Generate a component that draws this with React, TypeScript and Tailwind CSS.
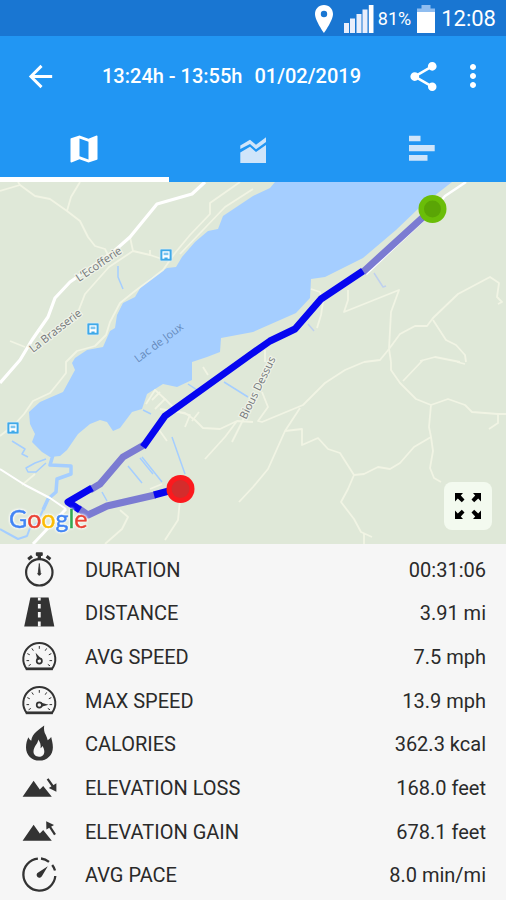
import type { ReactNode } from "react";
import { MdArrowBack, MdMap, MdMoreVert, MdShare } from "react-icons/md";

interface Stat {
  label: string;
  value: string;
  icon: ReactNode;
}

function StatIcon({ children }: { children: ReactNode }) {
  return (
    <svg viewBox="0 0 36 36" className="w-9 h-9 overflow-visible text-[#333333]" fill="currentColor" aria-hidden="true">
      {children}
    </svg>
  );
}

function StopwatchIcon() {
  return (
    <StatIcon>
      <circle cx="18.3" cy="20.3" r="13.2" fill="none" stroke="currentColor" strokeWidth="2.2" />
      <rect x="14.8" y="0.3" width="7" height="3.6" rx="0.8" />
      <rect x="16.6" y="3" width="3.4" height="4.2" />
      <path d="M7.2 7.2 11 4.2" stroke="currentColor" strokeWidth="3" />
      <path d="M29.4 7.2 25.6 4.2" stroke="currentColor" strokeWidth="3" />
      <path d="M18.3 11.5 19.3 20.5a1.5 1.5 0 1 1-2 0z" stroke="currentColor" strokeWidth="0.8" />
    </StatIcon>
  );
}

function RoadIcon() {
  return (
    <StatIcon>
      <path d="M9.4 2.4h18.2l5.7 29H3.2z" />
      <path
        d="M18.3 2.4v3.2M18.3 9v4.6M18.3 17v5.6M18.3 26.4v5"
        stroke="#f6f6f6"
        strokeWidth="2.8"
      />
    </StatIcon>
  );
}

function GaugeIcon({ needle }: { needle: string }) {
  return (
    <StatIcon>
      <path d="M5.6 29.8A16 16 0 1 1 31 29.8z" fill="none" stroke="currentColor" strokeWidth="2" strokeLinejoin="round" />
      <path d="M4.8 29.9h27" stroke="currentColor" strokeWidth="2.6" />
      <path
        d="M18.3 7v2.8M10.9 9.4l1.5 2.3M25.7 9.4l-1.5 2.3M6.3 14.6l2.5 1.2M30.3 14.6l-2.5 1.2M5.5 21.6h2.6M31.1 21.6h-2.6M7.6 26.8l2.2-1.4M29 26.8l-2.2-1.4"
        stroke="currentColor"
        strokeWidth="1"
      />
      <circle cx="18.3" cy="22" r="2.6" fill="none" stroke="currentColor" strokeWidth="1.7" />
      <path d={needle} />
    </StatIcon>
  );
}

function FlameIcon() {
  return (
    <StatIcon>
      <path
        fillRule="evenodd"
        d="M23.2-.6c-.6 4 .1 6.8 1.5 9.4.9 1.7 1.6 3.5 2 5.4 1.4-.8 2.6-1.9 3.5-3.2.4 2.3 1.7 6.2 1.7 10.2 0 7.8-5.8 13.4-13.5 13.4S5 29 5 21.4c0-4 1-7.6 2.4-10.2.6 1.5 1.5 2.7 2.8 3.5.4-4 2.6-6.7 5.6-9.4C18.3 3 20.7 1.2 23.2-.6zM17 13.5c.8 3.4-4.5 6.8-4.5 12 0 3.3 2.4 5.2 5.5 5.2s5.3-2 5.3-5c0-2.2-.9-4-1.8-5.6-.5 1-1 1.7-1.9 2.2.5-3.5-.6-6.8-2.6-8.8z"
      />
    </StatIcon>
  );
}

function MountainIcon({ direction }: { direction: "up" | "down" }) {
  return (
    <StatIcon>
      <path d="M1.6 26.8 12.6 10.8 18.8 19.6 22.2 16 30.8 26.8z" />
      {direction === "down" ? (
        <>
          <path d="M26.6 8.8 32 16.5" stroke="currentColor" strokeWidth="2.2" />
          <path d="M35.4 13.2 35.4 21.8 27.8 18z" />
        </>
      ) : (
        <>
          <path d="M34 20.6 28.8 12.6" stroke="currentColor" strokeWidth="2.2" />
          <path d="M25.4 15.6 25.2 7.2 33 11z" />
        </>
      )}
    </StatIcon>
  );
}

function PaceIcon() {
  return (
    <StatIcon>
      <path
        d="M16.9 1.6A16 16 0 1 0 34.3 19M34 13.5A16 16 0 0 0 31.2 8M28 4.8A16 16 0 0 0 20 1.5"
        fill="none"
        stroke="currentColor"
        strokeWidth="2.3"
      />
      <path d="M26.8 9.3 21 19a2.8 2.8 0 1 1-3.8-3.6z" />
    </StatIcon>
  );
}

const stats: Stat[] = [
  { label: "DURATION", value: "00:31:06", icon: <StopwatchIcon /> },
  { label: "DISTANCE", value: "3.91 mi", icon: <RoadIcon /> },
  { label: "AVG SPEED", value: "7.5 mph", icon: <GaugeIcon needle="M14.6 13.8 20 19.6 16.4 21.2z" /> },
  { label: "MAX SPEED", value: "13.9 mph", icon: <GaugeIcon needle="M27.6 21.8 20.4 19.8 20.4 23.8z" /> },
  { label: "CALORIES", value: "362.3 kcal", icon: <FlameIcon /> },
  { label: "ELEVATION LOSS", value: "168.0 feet", icon: <MountainIcon direction="down" /> },
  { label: "ELEVATION GAIN", value: "678.1 feet", icon: <MountainIcon direction="up" /> },
  { label: "AVG PACE", value: "8.0 min/mi", icon: <PaceIcon /> },
];

function StatusBar() {
  return (
    <div className="flex h-9 items-center justify-end gap-1 bg-[#1976d2] pt-0.5 pr-2.5 text-white">
      <svg viewBox="0 0 20 28" className="mr-1.5 h-7 w-5" fill="currentColor" aria-label="Location">
        <path
          fillRule="evenodd"
          d="M10 0C4.6 0 1 4 1 9c0 6.5 9 19 9 19s9-12.5 9-19c0-5-3.6-9-9-9zm0 5.8a3.2 3.2 0 1 1 0 6.4 3.2 3.2 0 0 1 0-6.4z"
        />
      </svg>
      <svg viewBox="0 0 30 28" className="h-7 w-[30px]" fill="#e9eefb" aria-label="Signal">
        <path d="M0 18h5v10H0zM6 13.5h5V28H6zM12.5 9h5v19h-5zM18.5 4.5h5V28h-5z" />
        <path d="M24.8 0h4.7v28h-4.7z" fill="#ffffff" />
      </svg>
      <span className="text-[18px] leading-6">81%</span>
      <svg viewBox="0 0 18 28" className="ml-0.5 h-7 w-[18px]" aria-label="Battery">
        <path d="M4.5 0h9v3.5H18V9H0V3.5h4.5z" fill="#8fbdf0" />
        <path d="M0 7h18v21H0z" fill="#ffffff" />
      </svg>
      <span className="ml-0.5 text-[22px] leading-7">12:08</span>
    </div>
  );
}

function AppBar() {
  return (
    <div className="flex h-20 items-center pl-5 pr-[13px]">
      <button type="button" aria-label="Back" className="flex size-10 items-center justify-center">
        <MdArrowBack size={35} />
      </button>
      <h1 className="ml-[42px] flex flex-1 gap-3 text-[20px] font-medium leading-6 whitespace-nowrap">
        <span>13:24h - 13:55h</span>
        <span>01/02/2019</span>
      </h1>
      <button type="button" aria-label="Share" className="flex size-10 items-center justify-center">
        <MdShare size={35} />
      </button>
      <button type="button" aria-label="More options" className="ml-2.5 flex size-10 items-center justify-center">
        <MdMoreVert size={36} />
      </button>
    </div>
  );
}

function Tabs() {
  return (
    <nav className="grid h-[66px] grid-cols-3">
      <button type="button" aria-label="Map" className="flex items-center justify-center border-b-[5px] border-white pt-1">
        <MdMap size={36} />
      </button>
      <button type="button" aria-label="Charts" className="flex items-center justify-center text-[#cfe5fa]">
        <svg viewBox="0 0 36 36" className="size-9" fill="currentColor">
          <path d="M5.3 14.6 15 8.8 21 13.8 31 6.3V11L21 18.3 15 13 5.3 18z" />
          <path d="M5.3 21.4 15 15.8 21 21 31 14V32H5.3z" />
        </svg>
      </button>
      <button type="button" aria-label="Laps" className="flex items-center justify-center text-[#cfe5fa]">
        <svg viewBox="0 0 36 36" className="size-9" fill="currentColor">
          <path d="M5 4.7h11.5v5.6H5zM5 14h25.7v6.2H5zM5 24h18.5v5.8H5z" />
        </svg>
      </button>
    </nav>
  );
}

function BusStop({ x, y }: { x: number; y: number }) {
  return (
    <g transform={`translate(${x} ${y})`}>
      <rect x="-6" y="-6" width="12" height="12" rx="1" fill="#3fa9e8" stroke="#d8ecf5" strokeWidth="0.8" />
      <path d="M-3.6-3.8h7.2v7.6h-2v-1.4h-3.2v1.4h-2z" fill="#ffffff" />
      <path d="M-2.4-2.4h4.8v2.6h-4.8z" fill="#7cc4ef" />
    </g>
  );
}

function RouteMap() {
  return (
    <section className="relative bg-[#dfe8d8]">
      <svg viewBox="0 0 506 362" className="block h-auto w-full" role="img" aria-label="Route map">
        <rect width="506" height="362" fill="#dfe8d8" />

        {/* lake and streams */}
        <path
          d="M275 0 270 6 253 14 223 34 218 47 208 49 195 60 182 75 176 85 167 86 152 95 142 103 135 115 123 121 117 133 115 146 110 149 103 165 87 168 75 176 72 181 75 188 63 210 40 220 29 230 30 242 35 252 32 260 42 270 50 275 60 274 67 268 78 252 90 242 100 238 107 240 113 249 120 246 132 230 142 227 147 212 163 202 177 205 192 198 192 180 207 175 220 170 221 156 253 150 296 131 310 116 311 97 325 95 363 76 396 48 420 25 452 0z"
          fill="#a5ceff"
        />
        <g fill="none" stroke="#a5ceff" strokeLinejoin="round">
          <path d="M53 273 50 283 71 284 71 292 57 297 56 310 48 317 43 328" strokeWidth="3.5" />
          <path d="M43 328 37 341 30 346 27 354 18 357 7 351 0 347" strokeWidth="2" />
          <path d="M12 259 25 267 22 272 28 275M46 277 35 281 26 286 28 290 36 290 46 281" strokeWidth="1.5" />
          <path d="M118 84 118 95 123 107M172 255 185 292M128 284 142 301M140 276 153 292M142 275 162 300M102 310 107 319M143 228 151 232M188 202 197 208M224 200 248 215" strokeWidth="1.5" />
          <path d="M374 91 383 105 386 104M308 142 314 149" strokeWidth="1.5" stroke="#bfd0ee" />
        </g>

        {/* minor roads */}
        <g fill="none" stroke="#f1f4e4" strokeWidth="1.8" strokeLinejoin="round">
          <path d="M0 9 20 3 35 14 50 17 67 29 80 39 88 55 95 64 105 67 108 73M67 29 71 15 80 0M20 3 18 0" />
          <path d="M130 55 133 69 109 85 85 112 78 130M133 69 150 73 162 77M150 73 150 68" />
          <path d="M240 0 210 21 210 32 190 53 175 71 163 88 135 109 120 121 110 140 106 153 95 164 77 169 66 180 66 191 59 200 50 211 33 219 24 232 14 243 0 254" />
          <path d="M253 7 225 25 180 72M10 159 25 165M38 147 45 153M22 303 35 292" />
          <path d="M311 107 320 110 323 120 321 133 317 146M348 108 348 118 344 130 399 108 391 130 389 167 400 152 415 144 427 144 433 136 458 112 490 95 499 101 497 115 502 120 498 122" />
          <path d="M433 138 446 158 456 163 465 173 466 180M389 167 380 178 364 180M420 179 435 175 460 180" />
          <path d="M364 180 345 188 325 201 308 218 303 223 262 240 258 239 268 225 262 210" />
          <path d="M391 180 391 188 400 201 416 217 431 223 448 217 465 223 472 230 498 232 506 232M498 232 498 241 489 247M431 223 429 245 431 255 433 269 430 286 434 296 441 300" />
          <path d="M431 255 414 265 400 281 390 287 378 285 364 292 354 293 340 271 328 267 318 256 302 263 302 247 285 249 300 226M285 249 268 287 253 305 239 320M354 293 348 307 341 320 354 337 361 350 372 355M364 351 364 362" />
          <path d="M403 199 423 178M389 167 391 180M457 180 465 182" />
          <path d="M160 227 185 231 195 238 203 246 220 247 237 239 253 240M237 239 225 255 205 277M245 234 232 260" />
          <path d="M146 222 155 208 165 217 155 227M160 210 152 218M165 217 178 230 190 233 185 245M157 245 167 259M192 239 199 230" />
          <path d="M265 168 265 180M203 185 208 193M180 318 178 338 165 358M120 328 128 335 122 347 105 362M162 302 150 307" />
        </g>

        {/* main roads */}
        <g fill="none" stroke="#ffffff" strokeLinejoin="round">
          <path d="M205 0 192 12 157 22 130 55 113 70 70 100 55 116 48 135 32 158 20 178 0 201" strokeWidth="3.2" />
          <path d="M0 287 25 303 50 316 66 327" strokeWidth="2" />
          <path d="M66 327 33 362" strokeWidth="3" />
          <path d="M466 0 445 14 432 30 366 92" strokeWidth="2.5" />
        </g>

        {/* place names */}
        <g fontFamily='"Open Sans", sans-serif' fontSize="11" paintOrder="stroke">
          <g fill="#74777a" stroke="#eef2e8" strokeWidth="2.5">
            <text transform="translate(79 100) rotate(-34)">L’Ecofferie</text>
            <text transform="translate(33 171) rotate(-38)">La Brasserie</text>
            <text transform="translate(246 238) rotate(-64)">Bious Dessus</text>
          </g>
          <text transform="translate(138 181) rotate(-37)" fill="#6489bb">
            Lac de Joux
          </text>
        </g>

        <BusStop x={166} y={73} />
        <BusStop x={93} y={147} />
        <BusStop x={13} y={246} />

        {/* recorded route */}
        <g fill="none" strokeWidth="7" strokeLinejoin="round">
          <path d="M432 27 363 90M144 263 123 275 100 302 90 308M78 326 88 333 107 324 155 313" stroke="#7b7bd2" />
          <path
            d="M363 89 357 93 321 117 295 147 270 159 250 173 165 234 143 265M92 306 68 320 80 328M154 313 180 306"
            stroke="#0606f0"
          />
        </g>
        <circle cx="432.5" cy="27" r="14" fill="#6abd08" />
        <circle cx="432.5" cy="27" r="8.5" fill="#5aa505" />
        <circle cx="180.5" cy="307" r="14" fill="#fb1a1e" />
        <circle cx="180.5" cy="307" r="9" fill="#d42c2c" />

        <text
          x="9"
          y="346"
          fontFamily="Lato, sans-serif"
          fontSize="25"
          strokeWidth="0.4"
          className="[filter:drop-shadow(0_0_1px_#fff)_drop-shadow(0_0_1px_#fff)]"
        >
          <tspan fill="#4285f4" stroke="#4285f4">G</tspan>
          <tspan fill="#ea4335" stroke="#ea4335">o</tspan>
          <tspan fill="#fbbc05" stroke="#fbbc05">o</tspan>
          <tspan fill="#4285f4" stroke="#4285f4">g</tspan>
          <tspan fill="#34a853" stroke="#34a853">l</tspan>
          <tspan fill="#ea4335" stroke="#ea4335">e</tspan>
        </text>
      </svg>
      <button
        type="button"
        aria-label="Full screen"
        className="absolute right-3.5 bottom-3.5 flex size-12 items-center justify-center rounded-lg bg-[#f3faef] text-black"
      >
        <svg viewBox="0 0 26 26" className="size-[26px]" fill="currentColor">
          <path d="M0 0h8L5.8 2.6 9.5 6.5 6.8 9.2 2.8 5.4 0 8.4z" />
          <path d="M26 0h-8l2.2 2.6-3.7 3.9 2.7 2.7 4-3.8L26 8.4z" />
          <path d="M0 26h8l-2.2-2.6 3.7-3.9-2.7-2.7-4 3.8L0 17.6z" />
          <path d="M26 26h-8l2.2-2.6-3.7-3.9 2.7-2.7 4 3.8 2.8-3z" />
        </svg>
      </button>
    </section>
  );
}

export default function App() {
  return (
    <div className="flex min-h-screen flex-col bg-[#f6f6f6] font-[Roboto,sans-serif]">
      <StatusBar />
      <header className="bg-[#2196f3] text-white">
        <AppBar />
        <Tabs />
      </header>
      <RouteMap />
      <dl className="grid flex-1 auto-rows-fr pt-1 pb-[3px] text-[20px] leading-6 text-[#2a2a2a]">
        {stats.map((stat) => (
          <div key={stat.label} className="flex items-center pr-5 pl-[21px]">
            {stat.icon}
            <dt className="ml-7 flex-1">{stat.label}</dt>
            <dd>{stat.value}</dd>
          </div>
        ))}
      </dl>
    </div>
  );
}
